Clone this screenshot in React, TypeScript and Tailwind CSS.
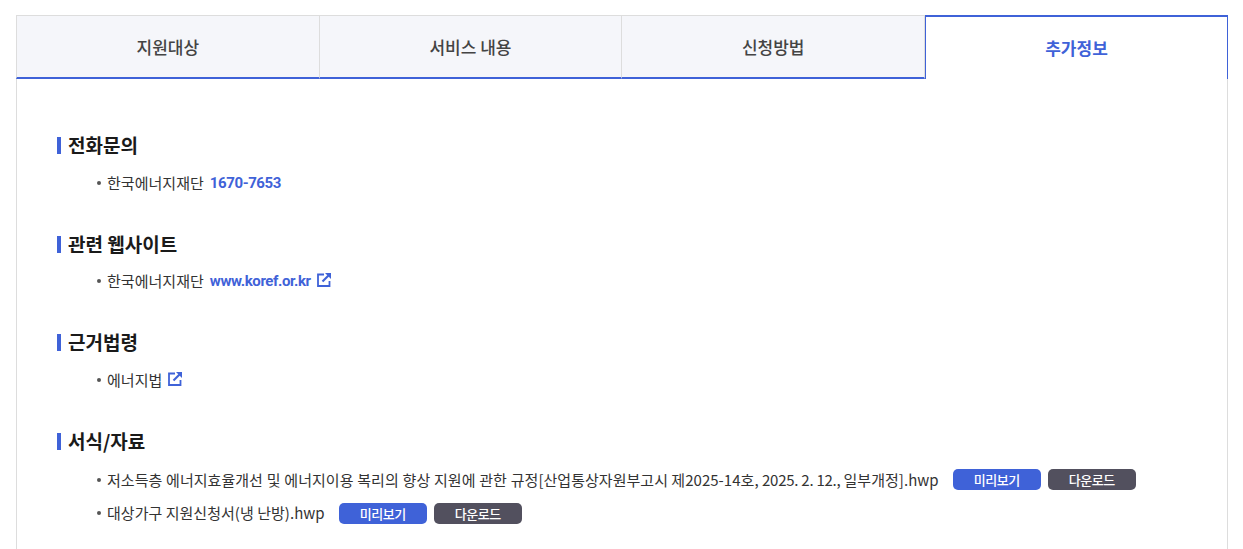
function ExtIcon() {
  return (
    <svg width="14" height="14" viewBox="0 0 14 14" fill="none" className="ml-[6px] -mt-[2px] inline-block" aria-hidden="true">
      <path d="M7 1.5H1V13H12.5V8" stroke="#3f62d8" strokeWidth="1.8" />
      <path d="M5.5 8.5L12 2" stroke="#3f62d8" strokeWidth="2.2" />
      <path d="M8 0H14V6Z" fill="#3f62d8" />
    </svg>
  );
}

function Tab({ label, active, first }: { label: string; active?: boolean; first?: boolean }) {
  if (active) {
    return (
      <div className="flex h-[64px] w-[303px] items-center justify-center border-x-[1px] border-t-2 border-[#3f62d8] bg-white pb-px text-[17px] font-bold text-[#3f62d8]">
        {label}
      </div>
    );
  }
  return (
    <div
      className={`flex h-[64px] flex-1 items-center justify-center border-t border-b-2 border-r border-t-[#dddddd] border-r-[#dddddd] border-b-[#3f62d8] bg-[#f5f6fa] text-[17px] font-medium text-[#444444] ${first ? "border-l border-l-[#dddddd]" : ""}`}
    >
      {label}
    </div>
  );
}

function Section({ title, children, className, gap }: { title: string; children: React.ReactNode; className?: string; gap: string }) {
  return (
    <section className={className}>
      <h3 className="flex h-[28px] items-center text-[19px] font-bold leading-[28px] text-[#1a1a1a]">
        <span className="mr-[7px] h-[17px] w-[4px] bg-[#3f62d8]" />
        {title}
      </h3>
      <ul className={`${gap} pl-[40px]`}>{children}</ul>
    </section>
  );
}

function Item({ children, className }: { children: React.ReactNode; className?: string }) {
  return (
    <li className={`flex h-[22px] items-center text-[15px] tracking-[0.03px] text-[#333333] ${className ?? ""}`}>
      <span className="mr-[6px] h-[4px] w-[4px] rounded-full bg-[#555555]" />
      {children}
    </li>
  );
}

function Buttons({ raised }: { raised?: boolean }) {
  const offset = raised ? "-mt-[1px]" : "mt-[1px]";
  return (
    <>
      <span className={`ml-[14px] ${offset} flex h-[21px] w-[88px] items-center justify-center rounded-[5px] bg-[#3f62d8] text-[13px] font-medium tracking-[-0.5px] text-white`}>미리보기</span>
      <span className={`ml-[7px] ${offset} flex h-[21px] w-[88px] items-center justify-center rounded-[5px] bg-[#52505e] text-[13px] font-medium tracking-[-0.5px] text-white`}>다운로드</span>
    </>
  );
}

export default function App() {
  return (
    <div className="h-[549px] overflow-hidden bg-white px-[16px] pt-[15px] font-['Noto_Sans_CJK_KR','Noto_Sans',sans-serif]">
      <div className="w-[1212px]">
        <div className="flex">
          <Tab label="지원대상" first />
          <Tab label="서비스 내용" />
          <Tab label="신청방법" />
          <Tab label="추가정보" active />
        </div>
        <div className="h-[500px] border-x border-[#dddddd] pl-[40px] pt-[52px]">
          <Section title="전화문의" gap="mt-[13px]">
            <Item>
              한국에너지재단<span className="ml-[6px] font-['Roboto',sans-serif] font-bold tracking-[-0.4px] text-[#3f62d8]">1670-7653</span>
            </Item>
          </Section>
          <Section title="관련 웹사이트" className="mt-[36px]" gap="mt-[12px]">
            <Item>
              한국에너지재단<span className="ml-[6px] font-['Roboto',sans-serif] font-bold tracking-[-0.4px] text-[#3f62d8]">www.koref.or.kr</span>
              <ExtIcon />
            </Item>
          </Section>
          <Section title="근거법령" className="mt-[36px]" gap="mt-[13px]">
            <Item>
              에너지법
              <ExtIcon />
            </Item>
          </Section>
          <Section title="서식/자료" className="mt-[36px]" gap="mt-[14px]">
            <Item>
              <span>
                <span className="[word-spacing:0.4px]">저소득층 에너지효율개선 및 에너지이용 복리의 향상 지원에 관한 규정[</span>
                산업통상자원부고시 제2025-14호,{" "}
                <span className="tracking-[-0.25px]">2025. 2. 12., </span>
                일부개정].hwp
              </span>
              <Buttons raised />
            </Item>
            <Item className="mt-[11px]">
              대상가구 지원신청서(냉 난방).hwp
              <Buttons />
            </Item>
          </Section>
        </div>
      </div>
    </div>
  );
}
